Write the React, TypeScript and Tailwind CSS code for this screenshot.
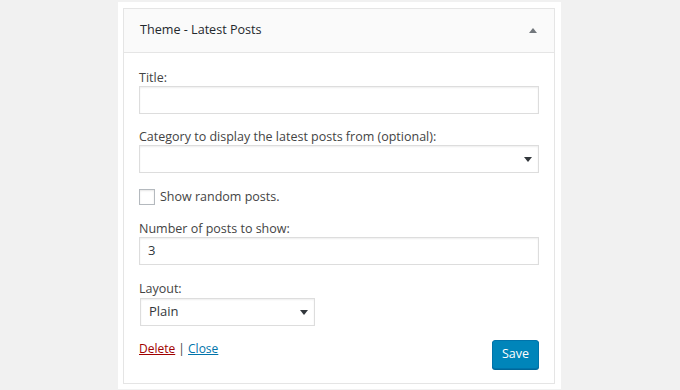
function Caret({ up = false, className = "" }: { up?: boolean; className?: string }) {
  return (
    <svg width="8" height="5" viewBox="0 0 8 5" className={className}>
      {up ? <path d="M0 5 L4 0 L8 5 Z" fill="currentColor" /> : <path d="M0 0 L8 0 L4 5 Z" fill="currentColor" />}
    </svg>
  );
}

function Field({ label, children }: { label: string; children: React.ReactNode }) {
  return (
    <div>
      <label className="block leading-[17px]">{label}</label>
      {children}
    </div>
  );
}

function TextInput({ value = "" }: { value?: string }) {
  return (
    <div className="flex h-[28px] w-full items-center border border-[#dddddd] bg-white px-[8px] text-[13px] text-[#32373c] shadow-[inset_0_1px_2px_rgba(0,0,0,0.07)]">
      {value}
    </div>
  );
}

function Select({ value = "", width = "w-full" }: { value?: string; width?: string }) {
  return (
    <div
      className={`flex h-[28px] ${width} items-center justify-between border border-[#dddddd] bg-white pl-[8px] pr-[6px] text-[#32373c] shadow-[inset_0_1px_2px_rgba(0,0,0,0.07)]`}
    >
      <span className="text-[13px]">{value}</span>
      <Caret className="text-[#32373c]" />
    </div>
  );
}

export default function App() {
  return (
    <div
      className="h-[390px] w-[680px] bg-[#f1f1f1] pt-[2px] text-[12.5px] text-[#444444]"
      style={{ fontFamily: '"Open Sans", "Noto Sans", sans-serif' }}
    >
      <div className="ml-[118px] h-[387px] w-[443px] bg-white pl-[5px] pr-[6px] pt-[6px]">
        <div className="border border-[#e5e5e5] bg-white">
          <div className="flex h-[44px] items-center justify-between border-b border-[#e5e5e5] bg-[#fafafa] pl-[16px] pr-[17px]">
            <h3 className="text-[12.6px] font-medium text-[#23282d]">Theme - Latest Posts</h3>
            <Caret up className="text-[#72777c]" />
          </div>
          <div className="flex flex-col px-[15px] pb-[14px] pt-[16px]">
            <Field label="Title:">
              <TextInput />
            </Field>
            <div className="mt-[14px]">
              <Field label="Category to display the latest posts from (optional):">
                <Select />
              </Field>
            </div>
            <div className="mt-[16px] flex items-center gap-[5px]">
              <span className="h-[16px] w-[16px] border border-[#b4b9be] bg-white shadow-[inset_0_1px_2px_rgba(0,0,0,0.1)]" />
              <span className="leading-[16px]">Show random posts.</span>
            </div>
            <div className="mt-[15px]">
              <Field label="Number of posts to show:">
                <TextInput value="3" />
              </Field>
            </div>
            <div className="mt-[15px]">
              <Field label="Layout:">
                <div className="mt-[1px] pl-[1px]">
                  <Select value="Plain" width="w-[175px]" />
                </div>
              </Field>
            </div>
            <div className="mt-[14px] flex items-start justify-between">
              <div className="text-[12px] leading-[17px]">
                <a className="text-[#a00000] underline">Delete</a>
                <span className="text-[#444444]"> | </span>
                <a className="text-[#0073aa] underline">Close</a>
              </div>
              <button className="h-[29px] rounded-[3px] border border-[#0073aa] bg-[#0085ba] px-[9px] text-[12.5px] text-white shadow-[0_1px_0_#006799]">
                Save
              </button>
            </div>
          </div>
        </div>
      </div>
    </div>
  );
}
